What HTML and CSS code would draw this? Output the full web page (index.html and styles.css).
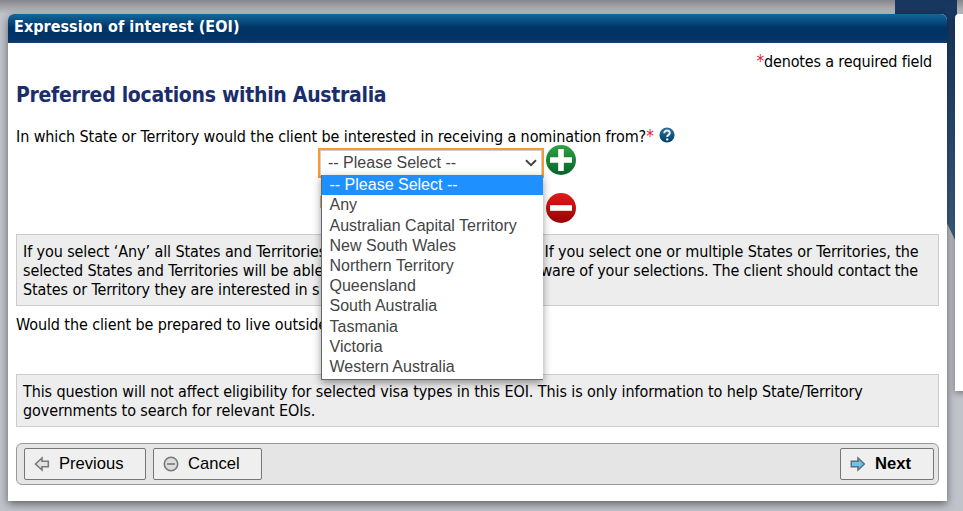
FILE: index.html
```html
<!DOCTYPE html>
<html lang="en">
<head>
<meta charset="utf-8">
<title>Expression of interest (EOI)</title>
<link rel="stylesheet" href="styles.css">
</head>
<body>
<div class="page">
  <svg class="backdrop" width="963" height="511" viewBox="0 0 963 511" aria-hidden="true">
    <defs>
      <linearGradient id="top" x1="0" y1="0" x2="0" y2="1"><stop offset="0" stop-color="#85868a"/><stop offset="1" stop-color="#c1c3cb"/></linearGradient>
      <linearGradient id="band" x1="0" y1="0" x2="0" y2="1"><stop offset="0" stop-color="#17365f"/><stop offset="1" stop-color="#3f6488"/></linearGradient>
    </defs>
    <rect width="963" height="14" fill="url(#top)"/>
    <path d="M895 0h62v240l-2 0-12-25-48-90z" fill="url(#band)"/>
  </svg>
  <main class="panel">
    <h1 class="panel-title"><span>Expression of interest (EOI)</span></h1>
    <div class="content">
      <p class="required"><span class="star">*</span><span class="required-text">denotes a required field</span></p>
      <h2><span>Preferred locations within Australia</span></h2>
      <div class="question"><span class="question-text">In which State or Territory would the client be interested in receiving a nomination from?</span><span class="star">*</span>
        <svg class="help" width="16" height="16" viewBox="0 0 16 16"><defs><linearGradient id="hg" x1="0" y1="0" x2="0" y2="1"><stop offset="0" stop-color="#2d7299"/><stop offset="1" stop-color="#003d68"/></linearGradient></defs><circle cx="8" cy="8" r="7.6" fill="url(#hg)"/><path d="M5.3 6.2C5.2 2.6 10.9 2.7 10.8 5.9C10.7 7.9 8.2 7.8 8.2 9.9" fill="none" stroke="#e6f2f8" stroke-width="2"/><circle cx="8.2" cy="12.4" r="1.2" fill="#e6f2f8"/></svg>
      </div>
      <div class="pickers">
        <div class="picker">
          <div class="select"><span>-- Please Select --</span>
            <svg width="12" height="8" viewBox="0 0 12 8"><path d="M1 1.2L6 6.2 11 1.2" fill="none" stroke="#444" stroke-width="2"/></svg>
          </div>
          <svg class="round" width="30" height="30" viewBox="0 0 30 30"><defs><linearGradient id="gg" x1="0" y1="0" x2="0" y2="1"><stop offset="0" stop-color="#30a244"/><stop offset="1" stop-color="#06622b"/></linearGradient></defs><circle cx="15" cy="15" r="15" fill="url(#gg)"/><path d="M12.2 4h5.6v8.2H26v5.6h-8.2V26h-5.6v-8.2H4v-5.6h8.2z" fill="#fff"/></svg>
          <ul class="menu">
            <li class="active">-- Please Select --</li>
            <li>Any</li><li>Australian Capital Territory</li><li>New South Wales</li><li>Northern Territory</li><li>Queensland</li><li>South Australia</li><li>Tasmania</li><li>Victoria</li><li>Western Australia</li>
          </ul>
        </div>
        <div class="picker second">
          <div class="select-edge"></div>
          <svg class="round" width="30" height="30" viewBox="0 0 30 30"><defs><linearGradient id="rg" x1="0" y1="0" x2="0" y2="1"><stop offset="0" stop-color="#e11b1c"/><stop offset="1" stop-color="#990003"/></linearGradient></defs><circle cx="15" cy="15" r="15" fill="url(#rg)"/><path d="M4 12.2h22v5.6H4z" fill="#fff"/></svg>
        </div>
      </div>
      <div class="note">
        <div class="line"><span class="before">If you select ‘Any’ all States and Territories</span><span>If you select one or multiple States or Territories, the</span></div>
        <div class="line"><span class="before">selected States and Territories will be able</span><span class="b2">ware of your selections. The client should contact the</span></div>
        <div class="line"><span>States or Territory they are interested in s</span></div>
      </div>
      <div class="question outside"><span>Would the client be prepared to live outside</span></div>
      <div class="note small">
        <div class="line"><span>This question will not affect eligibility for selected visa types in this EOI. This is only information to help State/Territory</span></div>
        <div class="line"><span>governments to search for relevant EOIs.</span></div>
      </div>
      <div class="actions">
        <button class="previous"><svg width="16" height="16" viewBox="0 0 16 16"><path d="M1.5 8L8 2v3.2h6.3v5.6H8V14z" fill="#e2e2e2" stroke="#77787a" stroke-width="1.6"/></svg>Previous</button>
        <button class="cancel"><svg width="16" height="16" viewBox="0 0 16 16"><circle cx="8" cy="8" r="6.7" fill="#dcdcdc" stroke="#77787a" stroke-width="1.6"/><path d="M4 8h8" stroke="#8a8a8c" stroke-width="2"/></svg>Cancel</button>
        <button class="next"><svg width="16" height="16" viewBox="0 0 16 16"><path d="M14.3 8L8 2v3.2H1.3v5.6H8V14z" fill="#66c5f2" stroke="#5f6c72" stroke-width="1.5"/></svg>Next</button>
      </div>
    </div>
  </main>
  <aside class="side"></aside>
</div>
</body>
</html>
```
FILE: styles.css
```css
* { box-sizing: border-box; }
body { margin: 0; }
.page {
  position: relative;
  display: flex;
  gap: 8px;
  align-items: flex-start;
  width: 963px;
  height: 511px;
  padding: 14px 0 0 8px;
  overflow: hidden;
  background: #c1c3cb;
  color: #000;
  font: 16px/19px "DejaVu Sans Condensed", "DejaVu Sans", sans-serif;
  font-stretch: condensed;
  letter-spacing: -.1px;
}
.backdrop { position: absolute; left: 0; top: 0; }
.panel {
  position: relative;
  flex: none;
  width: 939px;
  height: 487px;
  border-radius: 6px 6px 0 0;
  background: #fff;
  box-shadow: 0 3px 8px rgba(0, 0, 0, .5);
}
.side {
  position: relative;
  flex: none;
  width: 20px;
  height: 377px;
  border-radius: 4px 0 0 0;
  background: #fff;
  box-shadow: 0 2px 6px rgba(0, 0, 0, .4);
}
h1, h2, p, ul { margin: 0; padding: 0; }
span { white-space: nowrap; }
.panel-title {
  height: 29px;
  padding: 3px 6px;
  border-radius: 6px 6px 0 0;
  background: linear-gradient(#12689a, #003366 48%, #003366 85%, #123f6e);
  color: #fff;
  font-size: 16px;
  line-height: 19px;
  letter-spacing: .04px;
}
.content { padding: 0 8px; }
.required { display: flex; justify-content: flex-end; padding: 9px 7px 0 0; height: 38px; }
.required-text { letter-spacing: -.16px; }
.star { color: #e0223c; font-size: 17px; }
h2 { height: 42px; color: #1b2e6b; font-size: 21px; line-height: 29px; letter-spacing: -.29px; }
.question { display: flex; height: 25px; padding-top: 4px; }
.help { margin: 0 0 0 5px; }
.pickers { height: 86px; padding-left: 302px; }
.picker { position: relative; display: flex; gap: 2px; align-items: flex-start; height: 48px; }
.round { margin-top: -3px; }
.select {
  display: flex;
  align-items: center;
  justify-content: space-between;
  width: 226px;
  height: 30px;
  padding: 0 5px 0 8px;
  border: 2px solid #fa992f;
  box-shadow: inset 0 0 0 1px #ccd0d8;
  color: #444;
  font: 16px "Liberation Sans", Arial, sans-serif;
  letter-spacing: 0;
}
.select-edge { width: 224px; height: 12px; margin-left: 2px; border-left: 1px solid #efb56d; }
.menu {
  position: absolute;
  z-index: 2;
  left: 3px;
  top: 27px;
  width: 222px;
  height: 205px;
  border: solid #666;
  border-width: 0 0 1px 1px;
  background: #fff;
  box-shadow: 0 3px 8px rgba(0, 0, 0, .4);
  color: #444;
  font: 16px/20.2px "Liberation Sans", Arial, sans-serif;
  letter-spacing: 0;
  list-style: none;
}
.menu li { height: 20.2px; padding-left: 7.5px; }
.menu .active { height: 20.4px; background: #1e90ff; color: #fff; }
.note { height: 72px; padding: 7px 6px 0; border: 1px solid #ccc; background: #ededed; }
.line { display: flex; height: 19px; }
.before { flex: none; width: 521.5px; }
.b2 { margin-left: -4px; letter-spacing: -.16px; }
.outside { height: 68px; padding-top: 9px; }
.small { height: 53px; }
.actions {
  display: flex;
  gap: 7px;
  height: 42px;
  margin-top: 16px;
  padding: 4px 4px 0 7px;
  border: 1px solid #999;
  border-radius: 6px;
  background: #e5e5e5;
}
button {
  display: flex;
  align-items: center;
  gap: 9px;
  height: 32px;
  padding: 0 9px;
  border: 1px solid #767676;
  border-radius: 2px;
  background: #efefef;
  color: #000;
  font: 16.6px "Liberation Sans", Arial, sans-serif;
  letter-spacing: 0;
}
.previous { width: 122px; }
.cancel { width: 109px; }
.next { width: 94px; margin-left: auto; font-weight: bold; }
```
